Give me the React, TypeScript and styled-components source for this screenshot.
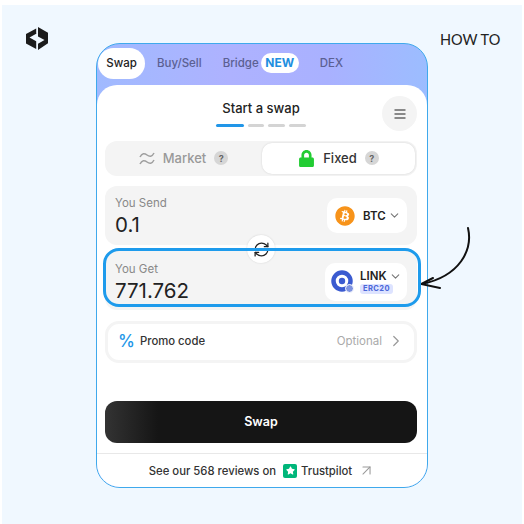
import { ReactElement } from 'react';

import { ArrowUpRight, ChevronDown, ChevronRight, RefreshCw } from 'lucide-react';
import { FaBitcoin, FaLock, FaStar } from 'react-icons/fa';
import styled, { createGlobalStyle } from 'styled-components';

const GlobalStyle = createGlobalStyle`
	html, body {
		margin: 0;
		background: #fff;
	}
	* {
		box-sizing: border-box;
	}
`;

const Help = (): ReactElement => <HelpDot>?</HelpDot>;

export default function App(): ReactElement {
	return (
		<>
			<GlobalStyle />
			<Page>
				<Backdrop>
					<LogoColumn>
						<svg width="22" height="23" viewBox="0 0 22 23" fill="#1c1c1c">
							<path d="M10.200 1.500 0 7v9.500l10.200 5.500zM3.500 10.500l6.700 3.700V6.800z" fillRule="evenodd" />
							<path d="M12 0l10 5.800v10.400L12 23zM18.500 13 12 9.500v7.200z" fillRule="evenodd" />
						</svg>
					</LogoColumn>
					<Card>
						<Tabs>
							<ActiveTab>Swap</ActiveTab>
							<Tab $offset={12}>Buy/Sell</Tab>
							<Tab $offset={21}>Bridge</Tab>
							<NewBadge>NEW</NewBadge>
							<Tab $offset={21}>DEX</Tab>
						</Tabs>
						<Body>
							<Content>
								<TitleRow>
									<span />
									<TitleBlock>
										<Title>Start a swap</Title>
										<Progress>
											<ProgressBar $width={28} $active />
											<ProgressBar $width={16} />
											<ProgressBar $width={17} />
											<ProgressBar $width={17} />
										</Progress>
									</TitleBlock>
									<MenuButton>
										<svg width="12" height="10" viewBox="0 0 12 10" stroke="#666" strokeWidth="1.300">
											<path d="M0.500 1h11M0.500 5h11M0.500 9h11" />
										</svg>
									</MenuButton>
								</TitleRow>
								<Segments>
									<Segment>
										<svg width="16" height="15" viewBox="0 0 16 15" fill="none" stroke="#a0a0a0" strokeWidth="1.500">
											<path d="M1 6c2-4 4.500-4 7-2s5 2 7-2M1 13c2-4 4.500-4 7-2s5 2 7-2" />
										</svg>
										<SegmentLabel>Market</SegmentLabel>
										<Help />
									</Segment>
									<Segment $active>
										<FaLock size={17} color="#22cc33" />
										<SegmentLabel $active>Fixed</SegmentLabel>
										<Help />
									</Segment>
								</Segments>
								<FieldStack>
									<Field>
										<Amount>
											<FieldLabel>You Send</FieldLabel>
											<FieldValue>0.1</FieldValue>
										</Amount>
										<CoinPill>
											<FaBitcoin size={20} color="#f7931a" />
											<CoinRow>
												<CoinName>BTC</CoinName>
												<ChevronDown size={13} color="#777" />
											</CoinRow>
										</CoinPill>
									</Field>
									<Field $highlighted>
										<Amount $lowered>
											<FieldLabel>You Get</FieldLabel>
											<FieldValue>771.762</FieldValue>
										</Amount>
										<CoinPill $tall>
											<svg width="23" height="23" viewBox="0 0 23 23">
												<circle cx="11" cy="11" r="8.500" fill="none" stroke="#3b5bd0" strokeWidth="4.500" />
												<circle cx="11" cy="11" r="3.200" fill="#3b5bd0" />
												<circle cx="18.500" cy="18.500" r="4" fill="#7e93e0" stroke="#fff" />
											</svg>
											<CoinText>
												<CoinRow>
													<CoinName>LINK</CoinName>
													<ChevronDown size={13} color="#777" />
												</CoinRow>
												<Network>ERC20</Network>
											</CoinText>
										</CoinPill>
									</Field>
									<FlipButton>
										<RefreshCw size={17} color="#222" strokeWidth={1.800} />
									</FlipButton>
								</FieldStack>
								<Promo>
									<PromoMark>%</PromoMark>
									<PromoLabel>Promo code</PromoLabel>
									<PromoHint>Optional</PromoHint>
									<ChevronRight size={18} color="#999" strokeWidth={1.600} />
								</Promo>
								<SwapButton>Swap</SwapButton>
							</Content>
							<Footer>
								<span>See our 568 reviews on</span>
								<StarBadge>
									<FaStar size={9} color="#fff" />
								</StarBadge>
								<span>Trustpilot</span>
								<FooterArrow>
									<ArrowUpRight size={17} color="#999" strokeWidth={1.500} />
								</FooterArrow>
							</Footer>
						</Body>
					</Card>
					<HowTo>HOW TO</HowTo>
				</Backdrop>
				<CurvedArrow width="60" height="70" viewBox="0 0 60 70" fill="none" stroke="#111" strokeLinecap="round">
					<path d="M48 8C53 30 40 56 2 64" strokeWidth="2" />
					<path d="M13 58 1 64l19 4" strokeWidth="2" />
				</CurvedArrow>
			</Page>
		</>
	);
}

const Page = styled.div`
	position: relative;
	width: 524px;
	height: 524px;
	padding: 5px 2px 0;
	font-family: Inter, 'Liberation Sans', sans-serif;
`;

const Backdrop = styled.div`
	display: grid;
	grid-template-columns: 94px 332px 1fr;
	align-items: start;
	height: 100%;
	padding-top: 22px;
	background: #f0f8ff;
`;

const LogoColumn = styled.div`
	display: flex;
	padding-left: 24px;
`;

const HowTo = styled.div`
	margin: 3px 0 0 12px;
	font-family: Lato, 'DejaVu Sans', sans-serif;
	font-size: 14.500px;
	line-height: 20px;
	color: #222;
	white-space: nowrap;
`;

const Card = styled.div`
	display: flex;
	flex-direction: column;
	height: 445px;
	margin-top: 16px;
	overflow: hidden;
	border: 1px solid #3fa9ec;
	border-radius: 24px;
	background: linear-gradient(90deg, #a0baff, #aeb2ff 40%, #a9b1ff 70%, #9cbdff);
`;

const Tabs = styled.div`
	display: flex;
	align-items: flex-start;
	height: 41px;
	padding: 4px 0 0 1px;
`;

const Tab = styled.div<{ $offset: number }>`
	margin-left: ${(p) => p.$offset}px;
	font-size: 11.500px;
	font-weight: 500;
	line-height: 30px;
	color: #5b6092;
`;

const ActiveTab = styled.div`
	width: 47px;
	height: 31px;
	border-radius: 16px;
	background: #fff;
	font-size: 11.500px;
	font-weight: 500;
	line-height: 30px;
	text-align: center;
	color: #222;
`;

const NewBadge = styled.div`
	width: 38px;
	height: 20px;
	margin: 5px 0 0 2px;
	border-radius: 10px;
	background: #fff;
	font-size: 12px;
	font-weight: 700;
	line-height: 20px;
	text-align: center;
	color: #1e8fe0;
`;

const Body = styled.div`
	flex: 1;
	display: flex;
	flex-direction: column;
	border-radius: 20px 20px 0 0;
	background: #fff;
`;

const Content = styled.div`
	flex: 1;
	display: flex;
	flex-direction: column;
	padding: 11px 10px 10px 8px;
`;

const TitleRow = styled.div`
	display: grid;
	grid-template-columns: 1fr auto 1fr;
	height: 35px;
`;

const TitleBlock = styled.div`
	display: flex;
	flex-direction: column;
	align-items: center;
`;

const Title = styled.div`
	font-size: 13px;
	font-weight: 500;
	line-height: 24px;
	color: #222;
`;

const Progress = styled.div`
	display: flex;
	gap: 4px;
	margin-top: 4px;
`;

const ProgressBar = styled.div<{ $width: number; $active?: boolean }>`
	width: ${(p) => p.$width}px;
	height: 2.500px;
	border-radius: 2px;
	background: ${(p) => (p.$active ? '#2196e8' : '#d4d4d4')};
`;

const MenuButton = styled.div`
	justify-self: end;
	display: flex;
	align-items: center;
	justify-content: center;
	width: 35px;
	height: 35px;
	border-radius: 50%;
	background: #f4f4f4;
`;

const Segments = styled.div`
	display: grid;
	grid-template-columns: 1fr 1fr;
	gap: 2px;
	height: 35px;
	margin-top: 10px;
	padding: 2px;
	border-radius: 12px;
	background: #f4f4f4;
`;

const Segment = styled.div<{ $active?: boolean }>`
	display: flex;
	align-items: center;
	justify-content: center;
	gap: 8px;
	padding-bottom: 1px;
	border-radius: 10px;
	background: ${(p) => (p.$active ? '#fff' : 'transparent')};
	box-shadow: ${(p) => (p.$active ? '0 0 2px rgba(0, 0, 0, 0.15)' : 'none')};
`;

const SegmentLabel = styled.span<{ $active?: boolean }>`
	font-size: 13px;
	font-weight: 500;
	color: ${(p) => (p.$active ? '#333' : '#999')};
`;

const HelpDot = styled.span`
	display: flex;
	align-items: center;
	justify-content: center;
	width: 14px;
	height: 14px;
	border-radius: 50%;
	background: #d6d6d6;
	font-size: 9px;
	font-weight: 700;
	color: #666;
`;

const FieldStack = styled.div`
	position: relative;
	display: flex;
	flex-direction: column;
	gap: 5px;
	margin-top: 10px;
`;

const Field = styled.div<{ $highlighted?: boolean }>`
	position: relative;
	display: flex;
	align-items: center;
	justify-content: space-between;
	height: ${(p) => (p.$highlighted ? 60 : 59)}px;
	padding: 0 10px;
	border-radius: 12px;
	background: #f4f4f4;
	${(p) =>
		p.$highlighted &&
		`
		&::after {
			content: '';
			position: absolute;
			top: -2px;
			left: -2px;
			right: -4px;
			bottom: 3px;
			z-index: 2;
			border: 3px solid #1e9bec;
			border-radius: 16px;
		}
	`}
`;

const Amount = styled.div<{ $lowered?: boolean }>`
	align-self: flex-start;
	padding-top: ${(p) => (p.$lowered ? 11 : 9)}px;
`;

const FieldLabel = styled.div`
	font-size: 11.500px;
	line-height: 16px;
	color: #888;
`;

const FieldValue = styled.div`
	margin-top: 1px;
	font-size: 20.500px;
	line-height: 26px;
	color: #222;
`;

const CoinPill = styled.div<{ $tall?: boolean }>`
	display: flex;
	align-items: center;
	gap: ${(p) => (p.$tall ? 6 : 8)}px;
	width: ${(p) => (p.$tall ? 82 : 80)}px;
	height: ${(p) => (p.$tall ? 38 : 35)}px;
	margin-top: ${(p) => (p.$tall ? 3 : 0)}px;
	padding-left: ${(p) => (p.$tall ? 6 : 8)}px;
	border-radius: 10px;
	background: #fff;
`;

const CoinText = styled.div`
	display: flex;
	flex-direction: column;
	gap: 1px;
`;

const CoinRow = styled.div`
	display: flex;
	align-items: center;
	gap: 2px;
`;

const CoinName = styled.span`
	font-size: 11.500px;
	font-weight: 600;
	line-height: 14px;
	color: #222;
`;

const Network = styled.span`
	width: 33px;
	height: 10px;
	border-radius: 3px;
	background: #dde3ff;
	font-size: 7.500px;
	font-weight: 700;
	line-height: 10px;
	letter-spacing: 0.4px;
	text-align: center;
	color: #4a66d8;
`;

const FlipButton = styled.div`
	position: absolute;
	top: 49px;
	left: 50%;
	z-index: 1;
	display: flex;
	align-items: center;
	justify-content: center;
	width: 28px;
	height: 28px;
	margin-left: -14px;
	border-radius: 50%;
	background: #fff;
	box-shadow: 0 0 2px rgba(0, 0, 0, 0.15);
`;

const Promo = styled.div`
	display: flex;
	align-items: center;
	height: 42px;
	margin-top: 11px;
	padding: 0 9px 2px 10px;
	border: 3px solid #f4f4f4;
	border-radius: 14px;
`;

const PromoMark = styled.span`
	width: 22px;
	font-size: 17px;
	font-weight: 500;
	color: #2196e8;
`;

const PromoLabel = styled.span`
	font-size: 11.300px;
	font-weight: 500;
	color: #333;
`;

const PromoHint = styled.span`
	margin: 0 5px 0 auto;
	font-size: 11.500px;
	color: #aaa;
`;

const SwapButton = styled.div`
	height: 42px;
	margin-top: auto;
	border-radius: 12px;
	background: linear-gradient(90deg, #333 0, #151515 17%);
	font-size: 12.500px;
	font-weight: 600;
	line-height: 41px;
	text-align: center;
	color: #fff;
`;

const Footer = styled.div`
	display: flex;
	align-items: center;
	justify-content: center;
	height: 34px;
	border-top: 1px solid #e8e8e8;
	font-size: 11.300px;
	font-weight: 500;
	color: #333;
`;

const StarBadge = styled.span`
	display: flex;
	align-items: center;
	justify-content: center;
	width: 14px;
	height: 14px;
	margin: 0 4px 0 7px;
	border-radius: 2px;
	background: #00b67a;
`;

const FooterArrow = styled.span`
	display: flex;
	margin-left: 6px;
`;

const CurvedArrow = styled.svg`
	position: absolute;
	top: 220px;
	left: 420px;
`;
